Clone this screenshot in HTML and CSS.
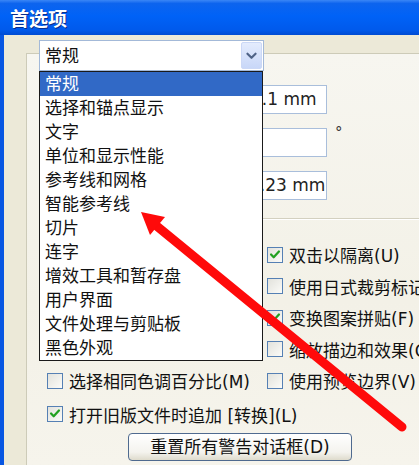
FILE: index.html
```html
<!DOCTYPE html>
<html lang="zh-CN">
<head>
<meta charset="utf-8">
<title>首选项</title>
<link rel="stylesheet" href="styles.css">
</head>
<body>
<div class="window">
  <div class="titlebar">首选项</div>
  <div class="client">
    <div class="panel">
      <div class="fields">
        <div class="field f1">0.1 mm</div>
        <div class="field-row"><div class="field"></div><span class="deg">°</span></div>
        <div class="field f3">0.23 mm</div>
      </div>
      <div class="sep"></div>
      <div class="checks">
        <label class="cb r1"><span class="box on"><svg viewBox="0 0 16 16"><path d="M3.5 7.5 L6.5 10.5 L12.5 4" /></svg></span>双击以隔离(U)</label>
        <label class="cb r2"><span class="box"></span>使用日式裁剪标记</label>
        <label class="cb r3"><span class="box on"><svg viewBox="0 0 16 16"><path d="M3.5 7.5 L6.5 10.5 L12.5 4" /></svg></span>变换图案拼贴(F)</label>
        <label class="cb r4"><span class="box"></span>缩放描边和效果(O)</label>
        <label class="cb r5"><span class="box"></span>使用预览边界(V)</label>
        <label class="cb l5"><span class="box"></span>选择相同色调百分比(M)</label>
        <label class="cb l6"><span class="box on"><svg viewBox="0 0 16 16"><path d="M3.5 7.5 L6.5 10.5 L12.5 4" /></svg></span>打开旧版文件时追加 [转换](L)</label>
      </div>
      <div class="btnrow"><button class="btn">重置所有警告对话框(D)</button></div>
    </div>
  </div>

  <div class="combo">
    <span class="combo-text">常规</span>
    <span class="combo-btn"><svg viewBox="0 0 21 26"><path d="M6 11 L10.5 15.5 L15 11" /></svg></span>
  </div>
  <ul class="list">
    <li class="sel">常规</li>
    <li>选择和锚点显示</li>
    <li>文字</li>
    <li>单位和显示性能</li>
    <li>参考线和网格</li>
    <li>智能参考线</li>
    <li>切片</li>
    <li>连字</li>
    <li>增效工具和暂存盘</li>
    <li>用户界面</li>
    <li>文件处理与剪贴板</li>
    <li>黑色外观</li>
  </ul>

  <svg class="arrow" viewBox="0 0 419 465">
    <line x1="153" y1="223" x2="402" y2="427" />
    <polygon points="141,212 150,235 165,217" />
  </svg>
</div>
</body>
</html>
```

FILE: styles.css
```css
* { box-sizing: border-box; }

body {
  margin: 0;
  width: 419px;
  height: 465px;
  overflow: hidden;
  font-family: "DejaVu Sans", "Noto Sans CJK SC", sans-serif;
  font-size: 17px;
  color: #111;
  background: #ece9d8;
}

.window {
  position: relative;
  width: 419px;
  height: 465px;
  display: flex;
  flex-direction: column;
  overflow: hidden;
}

.titlebar {
  flex: none;
  height: 35px;
  padding-left: 10px;
  line-height: 36px;
  font-family: "Noto Sans CJK SC", sans-serif;
  font-size: 19px;
  font-weight: bold;
  color: #fff;
  text-shadow: 1px 1px 0 #0a2f8c;
  background: linear-gradient(#3a86f6 0, #0d64ee 10%, #0062f7 45%, #005aec 85%, #004bd2 100%);
}

.client {
  flex: 1;
  display: flex;
  border-left: 4px solid #0756e2;
  background: #ece9d8;
  padding: 18px 0 0 22px;
}

.panel {
  flex: 1;
  min-width: 0;
  border-top: 1px solid #cdcbb8;
  border-left: 1px solid #cdcbb8;
  background: linear-gradient(#f7f6f0, #f3f1e7 60%, #f6f4ec);
}

.fields {
  margin-left: 224px;
  padding-top: 31px;
  display: flex;
  flex-direction: column;
  gap: 14px;
}

.field {
  width: 76px;
  height: 29px;
  border: 1px solid #a9bedb;
  background: #fff;
  padding-left: 3px;
  line-height: 27px;
  white-space: nowrap;
  overflow: hidden;
  color: #222;
}

.f1 { text-indent: -4px; }
.f3 { text-indent: -6px; }

.field-row {
  display: flex;
  align-items: flex-start;
}

.deg {
  margin-left: 8px;
  margin-top: -5px;
  line-height: 20px;
  font-size: 15px;
  color: #333;
}

.sep {
  margin-top: 18px;
  margin-left: 150px;
  border-top: 1px solid #d3d0c0;
  border-bottom: 1px solid #fff;
}

.checks {
  display: grid;
  grid-template-columns: 220px auto;
  grid-template-rows: repeat(5, 31.5px) 35px;
  margin-top: 19px;
  padding-left: 20px;
}

.cb {
  display: flex;
  align-items: center;
  gap: 6px;
  white-space: nowrap;
  color: #111;
}

.r1 { grid-column: 2; grid-row: 1; }
.r2 { grid-column: 2; grid-row: 2; }
.r3 { grid-column: 2; grid-row: 3; }
.r4 { grid-column: 2; grid-row: 4; }
.r5 { grid-column: 2; grid-row: 5; }
.l5 { grid-column: 1; grid-row: 5; }
.l6 { grid-column: 1; grid-row: 6; }

.box {
  flex: none;
  width: 16px;
  height: 16px;
  border: 1px solid #5580b4;
  background: linear-gradient(135deg, #e2e2dc, #fbfbf8);
  display: flex;
}

.box svg {
  width: 14px;
  height: 14px;
}

.box svg path {
  fill: none;
  stroke: #21a121;
  stroke-width: 2.6;
  stroke-linecap: round;
  stroke-linejoin: round;
}

.btnrow {
  padding-left: 101px;
  margin-top: 1.5px;
}

.btn {
  width: 224px;
  height: 28px;
  padding: 0;
  border: 1px solid #4f6a8f;
  border-radius: 4px;
  background: linear-gradient(#ffffff, #f4f3ee 70%, #dedbcc);
  font: inherit;
  color: #111;
  line-height: 26px;
}

.combo {
  position: absolute;
  left: 39px;
  top: 40px;
  width: 225px;
  height: 31px;
  border: 1px solid #a3b9d8;
  background: #fff;
}

.combo-text {
  display: block;
  padding: 2px 0 0 5px;
  line-height: 27px;
}

.combo-btn {
  position: absolute;
  right: 1px;
  top: 1px;
  width: 21px;
  height: 27px;
  border: 1px solid #cbd8f6;
  border-radius: 2px;
  background: linear-gradient(#e4ecfd, #c8d7f8);
}

.combo-btn svg {
  display: block;
  width: 19px;
  height: 25px;
}

.combo-btn path {
  fill: none;
  stroke: #4f6387;
  stroke-width: 2.4;
  stroke-linecap: round;
  stroke-linejoin: round;
}

.list {
  position: absolute;
  left: 39px;
  top: 71px;
  width: 224px;
  margin: 0;
  padding: 0;
  list-style: none;
  border: 1px solid #1a1a1a;
  background: #fff;
}

.list li {
  height: 24px;
  line-height: 24px;
  padding-left: 5px;
  white-space: nowrap;
  color: #111;
}

.list li.sel {
  background: #3169c6;
  color: #fff;
}

.arrow {
  position: absolute;
  left: 0;
  top: 0;
  width: 419px;
  height: 465px;
  pointer-events: none;
}

.arrow line {
  stroke: #ff0a0a;
  stroke-width: 9;
  stroke-linecap: round;
}

.arrow polygon {
  fill: #ff0a0a;
}
```
